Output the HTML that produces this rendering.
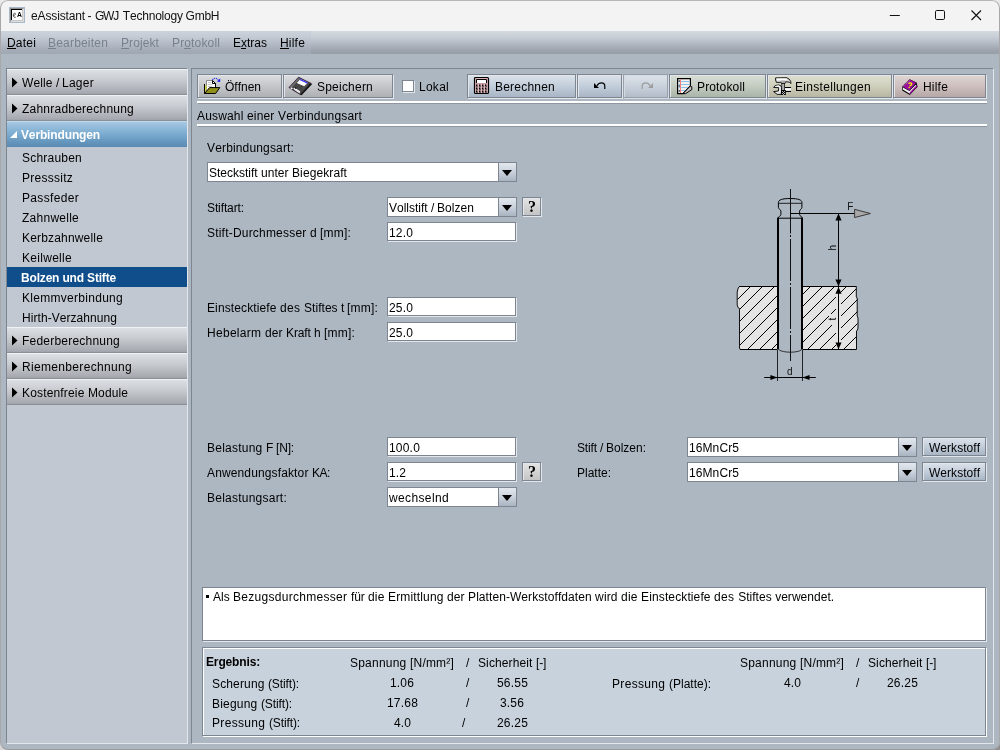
<!DOCTYPE html>
<html><head><meta charset="utf-8"><title>eAssistant - GWJ Technology GmbH</title>
<style>
html,body{margin:0;padding:0;}
body{width:1000px;height:750px;overflow:hidden;background:#8d8d8d;font-family:"Liberation Sans",sans-serif;font-size:12px;font-kerning:none;}
#win{will-change:transform;position:absolute;left:0;top:0;width:1000px;height:750px;background:#adb7c2;border-radius:8px;overflow:hidden;}
.t{position:absolute;white-space:nowrap;font-family:"Liberation Sans",sans-serif;}
.r{position:absolute;box-sizing:border-box;}
svg{position:absolute;overflow:visible;}

</style></head>
<body>
<div style="position:absolute;left:0;top:0;width:1000px;height:12px;background:#e9e9e9"></div><div style="position:absolute;left:0;top:738px;width:500px;height:12px;background:#d6d6d6"></div><div style="position:absolute;left:500px;top:738px;width:500px;height:12px;background:#909090"></div>
<div id="win">
<div class="r" style="left:0px;top:0px;width:1000px;height:31px;background:#f3f3f3;"></div>
<svg style="left:9px;top:7px" width="16" height="16" viewBox="0 0 16 16">
<rect x="0" y="0" width="16" height="16" fill="#a9b8c8"/>
<rect x="1" y="1" width="14" height="14" fill="#8e8e8e"/>
<path d="M15 1 V15 H1 Z" fill="#dedede"/>
<rect x="2" y="2" width="12" height="12" fill="#c8c8c8"/>
<rect x="2" y="2" width="11" height="11" fill="#000"/>
<rect x="3" y="3" width="10" height="10" fill="#fff"/>
<text x="7.9" y="10.3" font-family="Liberation Sans" font-weight="bold" font-size="6.8" fill="#000">A</text>
<path d="M6.6 6.6 C5.2 5.4 4 7.2 4.4 8.8 C4.8 10.4 5.8 10.8 6.8 10 M4.6 8.6 L6.6 7.4" stroke="#222" stroke-width="0.8" fill="none"/>
</svg>
<div class="t " style="left:31px;top:9px;line-height:14px;height:14px;font-size:12px;color:#111;letter-spacing:-0.136px;">eAssistant</div>
<div class="t " style="left:87.6px;top:9px;line-height:14px;height:14px;font-size:12px;color:#111;letter-spacing:0.004px;">-</div>
<div class="t " style="left:95px;top:9px;line-height:14px;height:14px;font-size:12px;color:#111;letter-spacing:-1.220px;">GWJ</div>
<div class="t " style="left:122.8px;top:9px;line-height:14px;height:14px;font-size:12px;color:#111;letter-spacing:-0.204px;">Technology</div>
<div class="t " style="left:185.6px;top:9px;line-height:14px;height:14px;font-size:12px;color:#111;letter-spacing:-0.267px;">GmbH</div>
<svg style="left:880px;top:0" width="120" height="31" viewBox="0 0 120 31">
<path d="M9.8 15.5 H19.8" stroke="#111" stroke-width="1" fill="none"/>
<rect x="55.5" y="10.5" width="9" height="9" rx="1.2" stroke="#111" stroke-width="1" fill="none"/>
<path d="M91.5 10.5 L101 20 M101 10.5 L91.5 20" stroke="#111" stroke-width="1.1" fill="none"/>
</svg>
<div class="r" style="left:1px;top:31px;width:998px;height:23px;background:linear-gradient(#d5dae0 0%,#c6ccd4 30%,#aeb5bf 60%,#9ca3ad 85%,#979ea8 100%);"></div>
<div class="r" style="left:1px;top:31px;width:310px;height:23px;background:linear-gradient(rgba(190,200,212,0.35),rgba(176,186,198,0.35));"></div>
<div class="t " style="left:7px;top:36px;line-height:14px;height:14px;font-size:12px;color:#000;letter-spacing:0.197px;">Datei</div>
<div class="r" style="left:7px;top:48px;width:9px;height:1px;background:#000;"></div>
<div class="t " style="left:48px;top:36px;line-height:14px;height:14px;font-size:12px;color:#78828d;letter-spacing:0.196px;">Bearbeiten</div>
<div class="r" style="left:48px;top:48px;width:8px;height:1px;background:#78828d;"></div>
<div class="t " style="left:121px;top:36px;line-height:14px;height:14px;font-size:12px;color:#78828d;letter-spacing:0.093px;">Projekt</div>
<div class="r" style="left:121px;top:48px;width:8px;height:1px;background:#78828d;"></div>
<div class="t " style="left:172px;top:36px;line-height:14px;height:14px;font-size:12px;color:#78828d;letter-spacing:0.146px;">Protokoll</div>
<div class="r" style="left:184px;top:48px;width:7px;height:1px;background:#78828d;"></div>
<div class="t " style="left:233px;top:36px;line-height:14px;height:14px;font-size:12px;color:#000;letter-spacing:-0.001px;">Extras</div>
<div class="r" style="left:241px;top:48px;width:5px;height:1px;background:#000;"></div>
<div class="t " style="left:280px;top:36px;line-height:14px;height:14px;font-size:12px;color:#000;letter-spacing:0.199px;">Hilfe</div>
<div class="r" style="left:280px;top:48px;width:9px;height:1px;background:#000;"></div>
<div class="r" style="left:6px;top:68px;width:182px;height:676px;background:#c1c8d1;border-top:1px solid #7d8690;border-left:1px solid #7d8690;border-right:1px solid #e3e7ec;border-bottom:1px solid #e3e7ec;"></div>
<div class="r" style="left:7px;top:69px;width:180px;height:26px;background:linear-gradient(#f0f2f4 0,#f0f2f4 1px,#dcdfe3 1px,#c8cbd0 42%,#a6aab0 92%,#9da1a8 calc(100% - 1px),#8b9097 calc(100% - 1px),#8b9097 100%);"></div>
<svg style="left:12px;top:77px" width="6" height="11"><path d="M0 0.5 L5.5 5.5 L0 10.5 Z" fill="#000"/></svg>
<div class="t " style="left:22px;top:76px;line-height:14px;height:14px;font-size:12px;color:#000;white-space:pre;"><span style="letter-spacing:0.110px">Welle </span><span style="letter-spacing:-0.334px">/ </span><span style="letter-spacing:0.262px">Lager</span></div>
<div class="r" style="left:7px;top:95px;width:180px;height:26px;background:linear-gradient(#f0f2f4 0,#f0f2f4 1px,#dcdfe3 1px,#c8cbd0 42%,#a6aab0 92%,#9da1a8 calc(100% - 1px),#8b9097 calc(100% - 1px),#8b9097 100%);"></div>
<svg style="left:12px;top:103px" width="6" height="11"><path d="M0 0.5 L5.5 5.5 L0 10.5 Z" fill="#000"/></svg>
<div class="t " style="left:22px;top:102px;line-height:14px;height:14px;font-size:12px;color:#000;letter-spacing:0.230px;">Zahnradberechnung</div>
<div class="r" style="left:7px;top:121px;width:180px;height:26px;background:linear-gradient(#c0d9ec 0,#c0d9ec 1px,#a6c8e2 1px,#7fafd2 45%,#6597be 80%,#5a8bb2 100%);"></div>
<svg style="left:10px;top:131px" width="7" height="7"><path d="M7 0 V7 H0 Z" fill="#fff"/></svg>
<div class="t " style="left:21px;top:128px;line-height:14px;height:14px;font-size:12px;color:#fff;font-weight:bold;letter-spacing:-0.139px;">Verbindungen</div>
<div class="t " style="left:22px;top:151px;line-height:14px;height:14px;font-size:12px;color:#000;letter-spacing:0.217px;">Schrauben</div>
<div class="t " style="left:22px;top:171px;line-height:14px;height:14px;font-size:12px;color:#000;letter-spacing:0.258px;">Presssitz</div>
<div class="t " style="left:22px;top:191px;line-height:14px;height:14px;font-size:12px;color:#000;letter-spacing:0.330px;">Passfeder</div>
<div class="t " style="left:22px;top:211px;line-height:14px;height:14px;font-size:12px;color:#000;letter-spacing:0.256px;">Zahnwelle</div>
<div class="t " style="left:22px;top:231px;line-height:14px;height:14px;font-size:12px;color:#000;letter-spacing:0.176px;">Kerbzahnwelle</div>
<div class="t " style="left:22px;top:251px;line-height:14px;height:14px;font-size:12px;color:#000;letter-spacing:0.294px;">Keilwelle</div>
<div class="r" style="left:7px;top:267px;width:180px;height:20px;background:#104e8b;"></div>
<div class="t " style="left:21px;top:271px;line-height:14px;height:14px;font-size:12px;color:#fff;font-weight:bold;letter-spacing:-0.176px;">Bolzen und Stifte</div>
<div class="t " style="left:22px;top:291px;line-height:14px;height:14px;font-size:12px;color:#000;letter-spacing:0.286px;">Klemmverbindung</div>
<div class="t " style="left:22px;top:311px;line-height:14px;height:14px;font-size:12px;color:#000;letter-spacing:0.059px;">Hirth-Verzahnung</div>
<div class="r" style="left:7px;top:327px;width:180px;height:26px;background:linear-gradient(#f0f2f4 0,#f0f2f4 1px,#dcdfe3 1px,#c8cbd0 42%,#a6aab0 92%,#9da1a8 calc(100% - 1px),#8b9097 calc(100% - 1px),#8b9097 100%);"></div>
<svg style="left:12px;top:335px" width="6" height="11"><path d="M0 0.5 L5.5 5.5 L0 10.5 Z" fill="#000"/></svg>
<div class="t " style="left:22px;top:334px;line-height:14px;height:14px;font-size:12px;color:#000;letter-spacing:0.218px;">Federberechnung</div>
<div class="r" style="left:7px;top:353px;width:180px;height:26px;background:linear-gradient(#f0f2f4 0,#f0f2f4 1px,#dcdfe3 1px,#c8cbd0 42%,#a6aab0 92%,#9da1a8 calc(100% - 1px),#8b9097 calc(100% - 1px),#8b9097 100%);"></div>
<svg style="left:12px;top:361px" width="6" height="11"><path d="M0 0.5 L5.5 5.5 L0 10.5 Z" fill="#000"/></svg>
<div class="t " style="left:22px;top:360px;line-height:14px;height:14px;font-size:12px;color:#000;letter-spacing:0.329px;">Riemenberechnung</div>
<div class="r" style="left:7px;top:379px;width:180px;height:26px;background:linear-gradient(#f0f2f4 0,#f0f2f4 1px,#dcdfe3 1px,#c8cbd0 42%,#a6aab0 92%,#9da1a8 calc(100% - 1px),#8b9097 calc(100% - 1px),#8b9097 100%);"></div>
<svg style="left:12px;top:387px" width="6" height="11"><path d="M0 0.5 L5.5 5.5 L0 10.5 Z" fill="#000"/></svg>
<div class="t " style="left:22px;top:386px;line-height:14px;height:14px;font-size:12px;color:#000;white-space:pre;"><span style="letter-spacing:0.164px">Kostenfreie </span><span style="letter-spacing:0.107px">Module</span></div>
<div class="r" style="left:191px;top:68px;width:803px;height:676px;border-top:1px solid #7d8690;border-left:1px solid #7d8690;border-right:1px solid #e3e7ec;border-bottom:1px solid #e3e7ec;"></div>
<div class="r" style="left:197px;top:74px;width:85px;height:24px;border:1px solid #7d8690;box-shadow:1px 1px 0 #e3e7ec,inset 1px 1px 0 #e3e7ec;background:linear-gradient(#dcdee0,#c4c6c9 50%,#aeb1b4);"></div>
<div class="t " style="left:225px;top:80px;line-height:14px;height:14px;font-size:12px;color:#000;letter-spacing:-0.004px;">Öffnen</div>
<div class="r" style="left:283px;top:74px;width:110px;height:24px;border:1px solid #7d8690;box-shadow:1px 1px 0 #e3e7ec,inset 1px 1px 0 #e3e7ec;background:linear-gradient(#dcdee0,#c4c6c9 50%,#aeb1b4);"></div>
<div class="t " style="left:317px;top:80px;line-height:14px;height:14px;font-size:12px;color:#000;letter-spacing:0.218px;">Speichern</div>
<div class="r" style="left:402px;top:80px;width:12px;height:12px;background:#fff;border:1px solid #7d8690;box-shadow:1px 1px 0 #e3e7ec;"></div>
<div class="t " style="left:419px;top:80px;line-height:14px;height:14px;font-size:12px;color:#000;letter-spacing:0.263px;">Lokal</div>
<div class="r" style="left:467px;top:74px;width:109px;height:24px;border:1px solid #7d8690;box-shadow:1px 1px 0 #e3e7ec,inset 1px 1px 0 #e3e7ec;background:linear-gradient(#dbe2ea,#c3cedb 50%,#a8b5c4);"></div>
<div class="t " style="left:495px;top:80px;line-height:14px;height:14px;font-size:12px;color:#000;letter-spacing:0.217px;">Berechnen</div>
<div class="r" style="left:577px;top:74px;width:45px;height:24px;border:1px solid #7d8690;box-shadow:1px 1px 0 #e3e7ec,inset 1px 1px 0 #e3e7ec;background:linear-gradient(#dbe2ea,#c3cedb 50%,#a8b5c4);"></div>
<div class="r" style="left:623px;top:74px;width:45px;height:24px;border:1px solid #98a1ab;box-shadow:1px 1px 0 #d4dae1,inset 1px 1px 0 #d4dae1;background:linear-gradient(#dde3ea,#c9d2dc 50%,#b3bdc9);"></div>
<div class="r" style="left:669px;top:74px;width:97px;height:24px;border:1px solid #7d8690;box-shadow:1px 1px 0 #e3e7ec,inset 1px 1px 0 #e3e7ec;background:linear-gradient(#d8ded6,#c4ccc2 50%,#aab4a8);"></div>
<div class="t " style="left:697px;top:80px;line-height:14px;height:14px;font-size:12px;color:#000;letter-spacing:0.146px;">Protokoll</div>
<div class="r" style="left:767px;top:74px;width:125px;height:24px;border:1px solid #7d8690;box-shadow:1px 1px 0 #e3e7ec,inset 1px 1px 0 #e3e7ec;background:linear-gradient(#e0e0d2,#cfcfbd 50%,#b6b6a2);"></div>
<div class="t " style="left:795px;top:80px;line-height:14px;height:14px;font-size:12px;color:#000;letter-spacing:0.304px;">Einstellungen</div>
<div class="r" style="left:893px;top:74px;width:93px;height:24px;border:1px solid #7d8690;box-shadow:1px 1px 0 #e3e7ec,inset 1px 1px 0 #e3e7ec;background:linear-gradient(#dfd6d4,#cdc0be 50%,#b5a8a6);"></div>
<div class="t " style="left:923px;top:80px;line-height:14px;height:14px;font-size:12px;color:#000;letter-spacing:0.199px;">Hilfe</div>
<svg style="left:204px;top:77px" width="17" height="17" viewBox="0 -1 17 17">
<path d="M2.5 2.5 H8.5 L11.5 5.5 V10 H5.5 L2.5 14 Z" fill="#fff" stroke="#8a8a8a" stroke-width="1"/>
<path d="M4 4.5 H7.5 M4 6.5 H8.5 M4 8.5 H8" stroke="#c8c8c8" stroke-width="1"/>
<path d="M8.5 2.5 V5.5 H11.5 Z" fill="#fff" stroke="#000" stroke-width="1" stroke-linejoin="round"/>
<path d="M11.5 5.5 V10" stroke="#000" stroke-width="1"/>
<path d="M0.5 6 V15.5" stroke="#000" stroke-width="1"/>
<path d="M1 7 H2.6 V14 L1 15 Z" fill="#d6d64a"/>
<path d="M0.5 15.5 L5.6 9.6 H15.8 L11.6 15.5 Z" fill="#8f8f1a" stroke="#000" stroke-width="1" stroke-linejoin="round"/>
<path d="M8.6 2 C9.6 -0.4 12.6 -0.4 14.2 1.8" fill="none" stroke="#2a2ae0" stroke-width="1.1" stroke-dasharray="1.2 0.8"/>
<path d="M16.2 0.6 V4 L12.8 3.4 Z" fill="#1c1cf0"/>
</svg>
<svg style="left:284px;top:72px" width="32" height="26" viewBox="0 0 32 26">
<path d="M5 15.6 L14.5 5.2 L27 11.4 L16.8 22.8 Z" fill="#454545" stroke="#2a0a2a" stroke-width="0.8" stroke-linejoin="round"/>
<path d="M26.6 11.2 L28.2 12 L17.6 23.2 L16.4 22.4 Z" fill="#111"/>
<path d="M5.6 15.2 L14.5 5.8 L16 6.6 L7.2 16.2 Z" fill="#707070"/>
<path d="M12.8 10.9 L16.4 6.9 L23.8 10.4 L20.2 14.3 Z" fill="#fff"/>
<path d="M16.4 6.9 L23.8 10.4 L23 11.5 L15.6 8 Z" fill="#3030ff"/>
<path d="M6.2 15.9 L8 15.4 L9 16.6 L7.4 17.4 Z" fill="#f0f0f0"/>
<path d="M9.4 16.2 L11 15.8 L16.2 19.2 L15.6 21.4 L10 17.8 Z" fill="#e8e8e8"/>
<path d="M10.8 15.6 L12 15.2 L12.6 16.6 L11.4 17 Z" fill="#111"/>
<path d="M19.4 16 L23.6 12" stroke="#888" stroke-width="0.7" stroke-dasharray="1 1"/>
</svg>
<svg style="left:474px;top:77px" width="16" height="17" viewBox="0 0 16 17">
<rect x="0.5" y="0.5" width="14" height="16" rx="1" fill="#dcb4b8" stroke="#000" stroke-width="1.2"/>
<rect x="3" y="3" width="9" height="3" fill="#fff"/><path d="M2.5 6 V2.5 H12.5 V6" fill="none" stroke="#000" stroke-width="1"/><path d="M2 6.5 H13" stroke="#c89aa0" stroke-width="1"/>
<g fill="#000">
<rect x="2" y="7.5" width="2" height="2"/><rect x="5" y="7.5" width="2" height="2"/><rect x="8" y="7.5" width="2" height="2"/><rect x="11" y="7.5" width="2" height="2"/>
<rect x="2" y="10.5" width="2" height="2"/><rect x="5" y="10.5" width="2" height="2"/><rect x="8" y="10.5" width="2" height="2"/><rect x="11" y="10.5" width="2" height="2"/>
<rect x="2" y="13.5" width="2" height="2"/><rect x="5" y="13.5" width="2" height="2"/><rect x="8" y="13.5" width="2" height="2"/><rect x="11" y="13.5" width="2" height="2"/>
</g>
<g fill="#e8c8cc">
<rect x="3" y="7.5" width="1" height="1"/><rect x="6" y="7.5" width="1" height="1"/><rect x="9" y="7.5" width="1" height="1"/><rect x="12" y="7.5" width="1" height="1"/>
<rect x="3" y="10.5" width="1" height="1"/><rect x="6" y="10.5" width="1" height="1"/><rect x="9" y="10.5" width="1" height="1"/><rect x="12" y="10.5" width="1" height="1"/>
<rect x="3" y="13.5" width="1" height="1"/><rect x="6" y="13.5" width="1" height="1"/><rect x="9" y="13.5" width="1" height="1"/><rect x="12" y="13.5" width="1" height="1"/>
</g>
</svg>
<svg style="left:592px;top:79px" width="16" height="12" viewBox="592 79 16 12">
<path d="M594 83 V88 H599 Z" fill="#000"/>
<path d="M597 85.6 C599 82 604.6 81.6 604.8 86 V89" fill="none" stroke="#000" stroke-width="1.2"/>
</svg>
<svg style="left:640px;top:79px" width="16" height="12" viewBox="640 79 16 12">
<path d="M653 83 V88 H648 Z" fill="#9c9c9c"/>
<path d="M650 85.6 C648 82 642.4 81.6 642.2 86 V89" fill="none" stroke="#9c9c9c" stroke-width="1.2"/>
</svg>
<svg style="left:677px;top:78px" width="17" height="17" viewBox="0 0 17 17">
<path d="M0.6 0.6 H13.4 V8 L6 15.6 H0.6 Z" fill="#f4f0ee" stroke="#000" stroke-width="1.2" stroke-linejoin="miter"/>
<path d="M1.5 3.5 H12.8 M1.5 6.5 H12.8 M1.5 9.5 H11 M1.5 12.5 H8" stroke="#8ec4ec" stroke-width="1"/>
<path d="M3.5 1.2 V15" stroke="#f08080" stroke-width="1"/>
<circle cx="2.2" cy="3" r="0.7" fill="#000"/><circle cx="2.2" cy="8" r="0.7" fill="#000"/><circle cx="2.2" cy="13" r="0.7" fill="#000"/>
<path d="M13.4 8 L14.8 8.8 V11.6 L8.6 15.6 H6 Z" fill="#c4c4c4" stroke="#000" stroke-width="1" stroke-linejoin="round"/>
</svg>
<svg style="left:773px;top:77px" width="19" height="19" viewBox="773 77 19 19">
<path d="M785 87.5 H791 V91.5 H785 Z" fill="#d8d8d8"/>
<path d="M785 88.4 H791 V90 H785 Z" fill="#fff"/>
<path d="M785 87.5 H791 M785 91.5 H791" stroke="#000" stroke-width="1"/>
<path d="M773.6 87.4 L775.2 85.6 L778.6 84.9 L781 86 L781.4 87.6 V94.4 H777.2 L773.6 91.6 L778.4 91 L778.8 87.7 Z" fill="#e4e4e4" stroke="#000" stroke-width="0.9" stroke-linejoin="round"/>
<path d="M775.6 86.4 L778.4 85.8 L780 86.6 L780 92" stroke="#fff" stroke-width="0.9" fill="none"/>
<path d="M781.4 83 H785 V94.8 H781.4 Z" fill="#111"/>
<path d="M782.4 83.4 H783.7 V90 H782.4 Z" fill="#fff"/>
<path d="M783.7 83.4 H784.3 V90 H783.7 Z" fill="#999"/>
<path d="M781 90 H785.8 V95 H781 Z" fill="#000"/>
<path d="M782 91 h1 v1 h-1z M784 91 h1 v1 h-1z M783 92 h1 v1 h-1z M782 93 h1 v1 h-1z M784 93 h1 v1 h-1z M783 94 h1 v1 h-1z" fill="#bbb"/>
<path d="M775.6 77.9 L786.6 77.7 L789 79 L790.8 81.4 V83.6 L789.6 82.2 L787 81.8 L785 82 V83.4 H781.4 V82 L779 82.4 H776.4 L775.6 80 Z" fill="#dedede" stroke="#000" stroke-width="0.9" stroke-linejoin="round"/>
<path d="M776.5 78.6 H786 L787.6 79.4 L786 80.2 H777 Z" fill="#fff"/>
<path d="M781.4 80.6 H785 V83 H781.4 Z" fill="#aaa"/>
</svg>
<svg style="left:900px;top:77px" width="20" height="20" viewBox="900 77 20 20">
<path d="M902.2 90.4 L902.4 86.2 L909.6 79.2 L916.6 82.6 L917.6 86.8 L909.8 95 Z" fill="#000"/>
<path d="M902.8 89.6 L909.8 93.8 L916.4 86.6 L916 84.6 L909.4 91 L903 87.4 Z" fill="#f0f0f0"/>
<path d="M909.8 94.4 L917.2 86.6 L916.8 85 L909.6 92.4 Z" fill="#9a109a"/>
<path d="M902.6 86.4 L909.6 79.6 L916.2 82.8 L909.2 90.4 Z" fill="#9a109a"/>
<path d="M903.4 86 L909.8 80" stroke="#d8b8d8" stroke-width="0.9" stroke-dasharray="1 0.8"/>
<path d="M908.4 83.6 C909.6 82.4 912.2 82.8 911.6 84.4 C911.2 85.4 910 85.2 909.7 86.2" fill="none" stroke="#f4f000" stroke-width="1.3"/>
<circle cx="909.2" cy="87.5" r="0.75" fill="#f4f000"/>
</svg>
<div class="r" style="left:197px;top:101px;width:790px;height:2px;background:#fff;"></div>
<div class="r" style="left:198px;top:103px;width:789px;height:1px;background:#8e969f;"></div>
<div class="t " style="left:197px;top:109px;line-height:14px;height:14px;font-size:12px;color:#000;white-space:pre;"><span style="letter-spacing:0.164px">Auswahl </span><span style="letter-spacing:0.164px">einer </span><span style="letter-spacing:0.187px">Verbindungsart</span></div>
<div class="r" style="left:197px;top:124px;width:790px;height:2px;background:#fff;"></div>
<div class="r" style="left:198px;top:126px;width:789px;height:1px;background:#8e969f;"></div>
<div class="t " style="left:207px;top:141px;line-height:14px;height:14px;font-size:12px;color:#000;letter-spacing:0.152px;">Verbindungsart:</div>
<div class="r" style="left:207px;top:162px;width:310px;height:20px;background:#fff;border:1px solid #7d8690;"></div>
<div class="r" style="left:498px;top:162px;width:19px;height:20px;border:1px solid #7d8690;background:linear-gradient(#e3e8ee,#cad2dc 50%,#a9b4c1);"></div>
<svg style="left:502px;top:170px" width="10" height="7"><path d="M0 0 H10 L5 6 Z" fill="#000"/></svg>
<div class="t " style="left:209px;top:166px;line-height:14px;height:14px;font-size:12px;color:#000;white-space:pre;"><span style="letter-spacing:-0.001px">Steckstift </span><span style="letter-spacing:0.052px">unter </span><span style="letter-spacing:0.097px">Biegekraft</span></div>
<div class="t " style="left:207px;top:201px;line-height:14px;height:14px;font-size:12px;color:#000;letter-spacing:-0.112px;">Stiftart:</div>
<div class="r" style="left:387px;top:197px;width:130px;height:20px;background:#fff;border:1px solid #7d8690;"></div>
<div class="r" style="left:498px;top:197px;width:19px;height:20px;border:1px solid #7d8690;background:linear-gradient(#e3e8ee,#cad2dc 50%,#a9b4c1);"></div>
<svg style="left:502px;top:205px" width="10" height="7"><path d="M0 0 H10 L5 6 Z" fill="#000"/></svg>
<div class="t " style="left:389px;top:201px;line-height:14px;height:14px;font-size:12px;color:#000;white-space:pre;"><span style="letter-spacing:-0.001px">Vollstift </span><span style="letter-spacing:-0.334px">/ </span><span style="letter-spacing:0.051px">Bolzen</span></div>
<div class="r" style="left:522px;top:197px;width:19px;height:19px;border:1px solid #7d8690;box-shadow:1px 1px 0 #e3e7ec,inset 1px 1px 0 #e3e7ec;background:linear-gradient(#e4e4e4,#c4c4c4);"></div>
<div class="t" style="left:528px;top:198px;font-family:'Liberation Serif';font-weight:bold;font-size:16px;line-height:17px;">?</div>
<div class="t " style="left:207px;top:226px;line-height:14px;height:14px;font-size:12px;color:#000;white-space:pre;"><span style="letter-spacing:0.203px">Stift-Durchmesser </span><span style="letter-spacing:-0.004px">d </span><span style="letter-spacing:0.201px">[mm]:</span></div>
<div class="r" style="left:387px;top:222px;width:129px;height:19px;background:#fff;border:1px solid #7d8690;box-shadow:1px 1px 0 #e3e7ec;"></div>
<div class="t " style="left:389px;top:226px;line-height:14px;height:14px;font-size:12px;color:#000;letter-spacing:0.161px;">12.0</div>
<div class="t " style="left:207px;top:301px;line-height:14px;height:14px;font-size:12px;color:#000;white-space:pre;"><span style="letter-spacing:0.117px">Einstecktiefe </span><span style="letter-spacing:0.330px">des </span><span style="letter-spacing:0.040px">Stiftes </span><span style="letter-spacing:-0.334px">t </span><span style="letter-spacing:0.201px">[mm]:</span></div>
<div class="r" style="left:387px;top:297px;width:129px;height:19px;background:#fff;border:1px solid #7d8690;box-shadow:1px 1px 0 #e3e7ec;"></div>
<div class="t " style="left:389px;top:301px;line-height:14px;height:14px;font-size:12px;color:#000;letter-spacing:0.161px;">25.0</div>
<div class="t " style="left:207px;top:326px;line-height:14px;height:14px;font-size:12px;color:#000;white-space:pre;"><span style="letter-spacing:0.294px">Hebelarm </span><span style="letter-spacing:0.081px">der </span><span style="letter-spacing:-0.113px">Kraft </span><span style="letter-spacing:-0.004px">h </span><span style="letter-spacing:0.201px">[mm]:</span></div>
<div class="r" style="left:387px;top:322px;width:129px;height:19px;background:#fff;border:1px solid #7d8690;box-shadow:1px 1px 0 #e3e7ec;"></div>
<div class="t " style="left:389px;top:326px;line-height:14px;height:14px;font-size:12px;color:#000;letter-spacing:0.161px;">25.0</div>
<div class="t " style="left:207px;top:441px;line-height:14px;height:14px;font-size:12px;color:#000;white-space:pre;"><span style="letter-spacing:0.229px">Belastung </span><span style="letter-spacing:-0.332px">F </span><span style="letter-spacing:-0.167px">[N]:</span></div>
<div class="r" style="left:387px;top:437px;width:129px;height:19px;background:#fff;border:1px solid #7d8690;box-shadow:1px 1px 0 #e3e7ec;"></div>
<div class="t " style="left:389px;top:441px;line-height:14px;height:14px;font-size:12px;color:#000;letter-spacing:0.194px;">100.0</div>
<div class="t " style="left:207px;top:466px;line-height:14px;height:14px;font-size:12px;color:#000;white-space:pre;"><span style="letter-spacing:0.133px">Anwendungsfaktor </span><span style="letter-spacing:-0.447px">KA:</span></div>
<div class="r" style="left:387px;top:462px;width:129px;height:19px;background:#fff;border:1px solid #7d8690;box-shadow:1px 1px 0 #e3e7ec;"></div>
<div class="t " style="left:389px;top:466px;line-height:14px;height:14px;font-size:12px;color:#000;letter-spacing:0.106px;">1.2</div>
<div class="r" style="left:522px;top:462px;width:19px;height:19px;border:1px solid #7d8690;box-shadow:1px 1px 0 #e3e7ec,inset 1px 1px 0 #e3e7ec;background:linear-gradient(#e4e4e4,#c4c4c4);"></div>
<div class="t" style="left:528px;top:463px;font-family:'Liberation Serif';font-weight:bold;font-size:16px;line-height:17px;">?</div>
<div class="t " style="left:207px;top:491px;line-height:14px;height:14px;font-size:12px;color:#000;letter-spacing:0.235px;">Belastungsart:</div>
<div class="r" style="left:387px;top:487px;width:130px;height:20px;background:#fff;border:1px solid #7d8690;"></div>
<div class="r" style="left:498px;top:487px;width:19px;height:20px;border:1px solid #7d8690;background:linear-gradient(#e3e8ee,#cad2dc 50%,#a9b4c1);"></div>
<svg style="left:502px;top:495px" width="10" height="7"><path d="M0 0 H10 L5 6 Z" fill="#000"/></svg>
<div class="t " style="left:389px;top:491px;line-height:14px;height:14px;font-size:12px;color:#000;letter-spacing:0.367px;">wechselnd</div>
<div class="t " style="left:577px;top:441px;line-height:14px;height:14px;font-size:12px;color:#000;white-space:pre;"><span style="letter-spacing:-0.168px">Stift </span><span style="letter-spacing:-0.334px">/ </span><span style="letter-spacing:-0.004px">Bolzen:</span></div>
<div class="r" style="left:687px;top:437px;width:230px;height:20px;background:#fff;border:1px solid #7d8690;"></div>
<div class="r" style="left:898px;top:437px;width:19px;height:20px;border:1px solid #7d8690;background:linear-gradient(#e3e8ee,#cad2dc 50%,#a9b4c1);"></div>
<svg style="left:902px;top:445px" width="10" height="7"><path d="M0 0 H10 L5 6 Z" fill="#000"/></svg>
<div class="t " style="left:689px;top:441px;line-height:14px;height:14px;font-size:12px;color:#000;letter-spacing:0.092px;">16MnCr5</div>
<div class="t " style="left:577px;top:466px;line-height:14px;height:14px;font-size:12px;color:#000;letter-spacing:-0.003px;">Platte:</div>
<div class="r" style="left:687px;top:462px;width:230px;height:20px;background:#fff;border:1px solid #7d8690;"></div>
<div class="r" style="left:898px;top:462px;width:19px;height:20px;border:1px solid #7d8690;background:linear-gradient(#e3e8ee,#cad2dc 50%,#a9b4c1);"></div>
<svg style="left:902px;top:470px" width="10" height="7"><path d="M0 0 H10 L5 6 Z" fill="#000"/></svg>
<div class="t " style="left:689px;top:466px;line-height:14px;height:14px;font-size:12px;color:#000;letter-spacing:0.092px;">16MnCr5</div>
<div class="r" style="left:922px;top:437px;width:64px;height:19px;border:1px solid #7d8690;box-shadow:1px 1px 0 #e3e7ec,inset 1px 1px 0 #e3e7ec;background:linear-gradient(#dbe2ea,#c3cedb 50%,#a8b5c4);"></div>
<div class="t " style="left:929px;top:441px;line-height:14px;height:14px;font-size:12px;color:#000;letter-spacing:0.036px;">Werkstoff</div>
<div class="r" style="left:922px;top:462px;width:64px;height:19px;border:1px solid #7d8690;box-shadow:1px 1px 0 #e3e7ec,inset 1px 1px 0 #e3e7ec;background:linear-gradient(#dbe2ea,#c3cedb 50%,#a8b5c4);"></div>
<div class="t " style="left:929px;top:466px;line-height:14px;height:14px;font-size:12px;color:#000;letter-spacing:0.036px;">Werkstoff</div>
<svg style="left:730px;top:185px" width="150" height="205" viewBox="730 185 150 205">
<defs>
<clipPath id="plL"><path d="M739.5 286.5 H777 V349.5 H739.5 V308.5 L737.4 305 V292 Z"/></clipPath>
<clipPath id="plR"><path d="M803 286.5 H836 V314 H829 V325 H836 V349.5 H803 Z M841 286.5 H856.3 V298 H857.6 V330 H856.3 V349.5 H841 Z"/></clipPath>
</defs>
<!-- plate -->
<path d="M739.5 286.5 H777 V349.5 H740.2 L739.5 348 V308.5 L738 307.5 L737.2 305 V292 L738.2 288 Z" fill="#e4e4e4"/>
<path d="M803 286.5 H856.3 V297 L857.2 298 V316 L858 318 V328 L857.5 330 L856.5 331 V349.5 H803 Z" fill="#e4e4e4"/>
<g clip-path="url(#plL)"><path d="M678.4 286.5 L615.4 349.5 M690.4 286.5 L627.4 349.5 M702.4 286.5 L639.4 349.5 M714.4 286.5 L651.4 349.5 M726.4 286.5 L663.4 349.5 M738.4 286.5 L675.4 349.5 M750.4 286.5 L687.4 349.5 M762.4 286.5 L699.4 349.5 M774.4 286.5 L711.4 349.5 M786.4 286.5 L723.4 349.5 M798.4 286.5 L735.4 349.5 M810.4 286.5 L747.4 349.5 M822.4 286.5 L759.4 349.5 M834.4 286.5 L771.4 349.5 M846.4 286.5 L783.4 349.5 M858.4 286.5 L795.4 349.5 M870.4 286.5 L807.4 349.5 M882.4 286.5 L819.4 349.5 M894.4 286.5 L831.4 349.5 M906.4 286.5 L843.4 349.5 M918.4 286.5 L855.4 349.5" stroke="#000" stroke-width="1" fill="none" shape-rendering="crispEdges"/></g>
<g clip-path="url(#plR)"><path d="M678.4 286.5 L615.4 349.5 M690.4 286.5 L627.4 349.5 M702.4 286.5 L639.4 349.5 M714.4 286.5 L651.4 349.5 M726.4 286.5 L663.4 349.5 M738.4 286.5 L675.4 349.5 M750.4 286.5 L687.4 349.5 M762.4 286.5 L699.4 349.5 M774.4 286.5 L711.4 349.5 M786.4 286.5 L723.4 349.5 M798.4 286.5 L735.4 349.5 M810.4 286.5 L747.4 349.5 M822.4 286.5 L759.4 349.5 M834.4 286.5 L771.4 349.5 M846.4 286.5 L783.4 349.5 M858.4 286.5 L795.4 349.5 M870.4 286.5 L807.4 349.5 M882.4 286.5 L819.4 349.5 M894.4 286.5 L831.4 349.5 M906.4 286.5 L843.4 349.5 M918.4 286.5 L855.4 349.5" stroke="#000" stroke-width="1" fill="none" shape-rendering="crispEdges"/></g>
<path d="M739 286.5 H777 M803 286.5 H856.5 M740 349.5 H777 M803 349.5 H856.5" stroke="#000" stroke-width="1.2" fill="none"/>
<path d="M739.5 286.5 L738.2 288 L737.2 292 V305 L738 307.5 L739.5 308.5 V348 L740.2 349.5" stroke="#111" stroke-width="1" fill="none"/>
<path d="M856.3 286.5 V297 L857.2 298 V316 L858 318 V328 L857.5 330 L856.5 331 V349.5" stroke="#111" stroke-width="1" fill="none"/>
<!-- pin body -->
<path d="M778 218 V349.5 M802 218 V349.5" stroke="#000" stroke-width="2" fill="none"/>
<path d="M777 218.2 H803" stroke="#000" stroke-width="1" fill="none"/>
<!-- pin head -->
<path d="M778.4 207.4 V202.4 C778.4 200 782 198.5 790.2 198.5 C798.4 198.5 801.9 200 801.9 202.4 V207.4 C801.9 209.4 799.6 209.2 799.6 211.2 V214.4 C799.6 216.6 802.2 216.2 802.2 218 M778.4 207.4 C778.4 209.4 780.9 209.2 780.9 211.2 V214.4 C780.9 216.6 778.1 216.2 778.1 218" stroke="#000" stroke-width="1" fill="none"/>
<path d="M778.4 203.3 H801.9" stroke="#111" stroke-width="0.9" fill="none"/>
<!-- pin bottom -->
<path d="M779 349.8 C783 353 798 353 801.5 349.8" stroke="#111" stroke-width="0.8" fill="none"/>
<!-- centre line -->
<path d="M790.5 189 V233.5 M790.5 235 V237 M790.5 239 V281 M790.5 283 V285 M790.5 287 V329 M790.5 331 V333 M790.5 335 V361" stroke="#111" stroke-width="1" fill="none"/>
<!-- force -->
<path d="M790.5 213.5 H855" stroke="#000" stroke-width="1" fill="none"/>
<path d="M854.6 209.3 L870.4 213.5 L854.6 217.5 Z" fill="#a8a8a8" stroke="#3a3a3a" stroke-width="1"/>
<text x="847.2" y="209.8" font-family="Liberation Sans" font-size="10" fill="#111">F</text>
<!-- dim h / t -->
<path d="M838.5 214 V349" stroke="#000" stroke-width="1" fill="none"/>
<path d="M838.5 213.6 L835.4 220.4 H841.6 Z M838.5 286.2 L835.4 279.4 H841.6 Z M838.5 287 L835.4 293.8 H841.6 Z M838.5 349.2 L835.4 342.4 H841.6 Z" fill="#000"/>
<text transform="translate(835.6 250.4) rotate(-90)" font-family="Liberation Sans" font-size="10" fill="#000">h</text>
<text transform="translate(835.6 320.6) rotate(-90)" font-family="Liberation Sans" font-size="10" fill="#000">t</text>
<!-- dim d -->
<path d="M777.5 350 V381 M802.5 350 V381" stroke="#111" stroke-width="0.9" fill="none"/>
<path d="M764.2 377.5 H815.8" stroke="#000" stroke-width="1" fill="none"/>
<path d="M777.5 377.5 L770.4 375 V380 Z M802.5 377.5 L809.6 375 V380 Z" fill="#000"/>
<text x="787" y="374.6" font-family="Liberation Sans" font-size="10" fill="#111">d</text>
</svg>
<div class="r" style="left:202px;top:587px;width:784px;height:54px;background:#fff;border:1px solid #7d8690;box-shadow:1px 1px 0 #e3e7ec;"></div>
<div class="r" style="left:206px;top:595px;width:3px;height:3px;background:#000;"></div>
<div class="t " style="left:213px;top:590px;line-height:14px;height:14px;font-size:12px;color:#000;white-space:pre;"><span style="letter-spacing:-0.001px">Als </span><span style="letter-spacing:0.294px">Bezugsdurchmesser </span><span style="letter-spacing:-0.084px">für </span><span style="letter-spacing:0.163px">die </span><span style="letter-spacing:0.150px">Ermittlung </span><span style="letter-spacing:0.081px">der </span><span style="letter-spacing:0.070px">Platten-Werkstoffdaten </span><span style="letter-spacing:0.133px">wird </span><span style="letter-spacing:0.163px">die </span><span style="letter-spacing:0.117px">Einstecktiefe </span><span style="letter-spacing:0.330px">des </span><span style="letter-spacing:0.040px">Stiftes </span><span style="letter-spacing:0.030px">verwendet.</span></div>
<div class="r" style="left:202px;top:647px;width:784px;height:89px;border:1px solid #7d8690;box-shadow:1px 1px 0 #fff,inset 1px 1px 0 #fff;background:#c8d2dc;"></div>
<div class="t " style="left:206px;top:655px;line-height:14px;height:14px;font-size:12px;color:#000;font-weight:bold;letter-spacing:-0.149px;">Ergebnis:</div>
<div class="t " style="left:350px;top:656px;line-height:14px;height:14px;font-size:12px;color:#000;white-space:pre;"><span style="letter-spacing:0.216px">Spannung </span><span style="letter-spacing:0.192px">[N/mm²]</span></div>
<div class="t " style="left:466px;top:656px;line-height:14px;height:14px;font-size:12px;color:#000;letter-spacing:-0.334px;">/</div>
<div class="t " style="left:478px;top:656px;line-height:14px;height:14px;font-size:12px;color:#000;white-space:pre;"><span style="letter-spacing:0.119px">Sicherheit </span><span style="letter-spacing:-0.221px">[-]</span></div>
<div class="t " style="left:740px;top:656px;line-height:14px;height:14px;font-size:12px;color:#000;white-space:pre;"><span style="letter-spacing:0.216px">Spannung </span><span style="letter-spacing:0.192px">[N/mm²]</span></div>
<div class="t " style="left:856px;top:656px;line-height:14px;height:14px;font-size:12px;color:#000;letter-spacing:-0.334px;">/</div>
<div class="t " style="left:868px;top:656px;line-height:14px;height:14px;font-size:12px;color:#000;white-space:pre;"><span style="letter-spacing:0.119px">Sicherheit </span><span style="letter-spacing:-0.221px">[-]</span></div>
<div class="t " style="left:212px;top:677px;line-height:14px;height:14px;font-size:12px;color:#000;white-space:pre;"><span style="letter-spacing:0.144px">Scherung </span><span style="letter-spacing:-0.125px">(Stift):</span></div>
<div class="t " style="left:390px;top:676px;line-height:14px;height:14px;font-size:12px;color:#000;letter-spacing:0.161px;">1.06</div>
<div class="t " style="left:466px;top:676px;line-height:14px;height:14px;font-size:12px;color:#000;letter-spacing:-0.334px;">/</div>
<div class="t " style="left:497px;top:676px;line-height:14px;height:14px;font-size:12px;color:#000;letter-spacing:0.194px;">56.55</div>
<div class="t " style="left:212px;top:697px;line-height:14px;height:14px;font-size:12px;color:#000;white-space:pre;"><span style="letter-spacing:0.203px">Biegung </span><span style="letter-spacing:-0.125px">(Stift):</span></div>
<div class="t " style="left:387px;top:696px;line-height:14px;height:14px;font-size:12px;color:#000;letter-spacing:0.194px;">17.68</div>
<div class="t " style="left:466px;top:696px;line-height:14px;height:14px;font-size:12px;color:#000;letter-spacing:-0.334px;">/</div>
<div class="t " style="left:500px;top:696px;line-height:14px;height:14px;font-size:12px;color:#000;letter-spacing:0.161px;">3.56</div>
<div class="t " style="left:212px;top:716px;line-height:14px;height:14px;font-size:12px;color:#000;white-space:pre;"><span style="letter-spacing:0.330px">Pressung </span><span style="letter-spacing:-0.125px">(Stift):</span></div>
<div class="t " style="left:394px;top:716px;line-height:14px;height:14px;font-size:12px;color:#000;letter-spacing:0.106px;">4.0</div>
<div class="t " style="left:462px;top:716px;line-height:14px;height:14px;font-size:12px;color:#000;letter-spacing:-0.334px;">/</div>
<div class="t " style="left:497px;top:716px;line-height:14px;height:14px;font-size:12px;color:#000;letter-spacing:0.194px;">26.25</div>
<div class="t " style="left:612px;top:677px;line-height:14px;height:14px;font-size:12px;color:#000;white-space:pre;"><span style="letter-spacing:0.330px">Pressung </span><span style="letter-spacing:-0.001px">(Platte):</span></div>
<div class="t " style="left:784px;top:676px;line-height:14px;height:14px;font-size:12px;color:#000;letter-spacing:0.106px;">4.0</div>
<div class="t " style="left:856px;top:676px;line-height:14px;height:14px;font-size:12px;color:#000;letter-spacing:-0.334px;">/</div>
<div class="t " style="left:887px;top:676px;line-height:14px;height:14px;font-size:12px;color:#000;letter-spacing:0.194px;">26.25</div>
<div class="r" style="left:0px;top:0px;width:1000px;height:750px;border:1px solid #a8a8a8;border-top-color:#b6b6b6;border-bottom-color:#9a9a9a;border-radius:8px;pointer-events:none;"></div>
</div>
</body></html>
